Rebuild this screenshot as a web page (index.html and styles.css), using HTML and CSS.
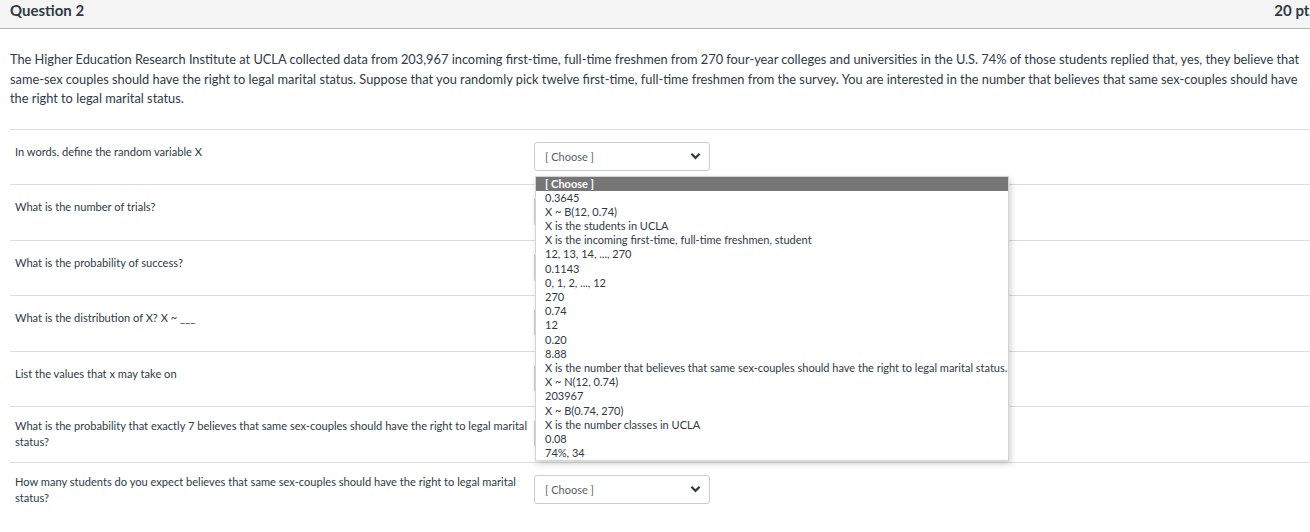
FILE: index.html
```html
<!DOCTYPE html>
<html>
<head>
<meta charset="utf-8">
<link rel="stylesheet" href="styles.css">
</head>
<body>
<div class="question">
  <div class="q-header">
    <span class="q-title">Question 2</span>
    <span class="q-points">20 pts</span>
  </div>
  <div class="q-text">The Higher Education Research Institute at UCLA collected data from 203,967 incoming first-time, full-time freshmen from 270 four-year colleges and universities in the U.S. 74% of those students replied that, yes, they believe that same-sex couples should have the right to legal marital status. Suppose that you randomly pick twelve first-time, full-time freshmen from the survey. You are interested in the number that believes that same sex-couples should have the right to legal marital status.</div>
  <div class="answers">
    <div class="row">
      <div class="label">In words, define the random variable X</div>
      <div class="control">
        <div class="select"><span>[ Choose ]</span><svg class="chev" viewBox="0 0 12 8" width="11" height="8"><path d="M1.5 1.5 L6 6 L10.5 1.5" fill="none" stroke="#2d3b45" stroke-width="2.4"/></svg></div>
        <ul class="dropdown">
          <li class="active">[ Choose ]</li>
          <li>0.3645</li>
          <li>X ~ B(12, 0.74)</li>
          <li>X is the students in UCLA</li>
          <li>X is the incoming first-time, full-time freshmen, student</li>
          <li>12, 13, 14, ..., 270</li>
          <li>0.1143</li>
          <li>0, 1, 2, ..., 12</li>
          <li>270</li>
          <li>0.74</li>
          <li>12</li>
          <li>0.20</li>
          <li>8.88</li>
          <li>X is the number that believes that same sex-couples should have the right to legal marital status.</li>
          <li>X ~ N(12, 0.74)</li>
          <li>203967</li>
          <li>X ~ B(0.74, 270)</li>
          <li>X is the number classes in UCLA</li>
          <li>0.08</li>
          <li>74%, 34</li>
        </ul>
      </div>
    </div>
    <div class="row">
      <div class="label">What is the number of trials?</div>
      <div class="control"><div class="select"><span>[ Choose ]</span><svg class="chev" viewBox="0 0 12 8" width="11" height="8"><path d="M1.5 1.5 L6 6 L10.5 1.5" fill="none" stroke="#2d3b45" stroke-width="2.4"/></svg></div></div>
    </div>
    <div class="row">
      <div class="label">What is the probability of success?</div>
      <div class="control"><div class="select"><span>[ Choose ]</span><svg class="chev" viewBox="0 0 12 8" width="11" height="8"><path d="M1.5 1.5 L6 6 L10.5 1.5" fill="none" stroke="#2d3b45" stroke-width="2.4"/></svg></div></div>
    </div>
    <div class="row">
      <div class="label">What is the distribution of X? X ~ ___</div>
      <div class="control"><div class="select"><span>[ Choose ]</span><svg class="chev" viewBox="0 0 12 8" width="11" height="8"><path d="M1.5 1.5 L6 6 L10.5 1.5" fill="none" stroke="#2d3b45" stroke-width="2.4"/></svg></div></div>
    </div>
    <div class="row">
      <div class="label">List the values that x may take on</div>
      <div class="control"><div class="select"><span>[ Choose ]</span><svg class="chev" viewBox="0 0 12 8" width="11" height="8"><path d="M1.5 1.5 L6 6 L10.5 1.5" fill="none" stroke="#2d3b45" stroke-width="2.4"/></svg></div></div>
    </div>
    <div class="row two">
      <div class="label">What is the probability that exactly 7 believes that same sex-couples should have the right to legal marital status?</div>
      <div class="control"><div class="select"><span>[ Choose ]</span><svg class="chev" viewBox="0 0 12 8" width="11" height="8"><path d="M1.5 1.5 L6 6 L10.5 1.5" fill="none" stroke="#2d3b45" stroke-width="2.4"/></svg></div></div>
    </div>
    <div class="row two">
      <div class="label">How many students do you expect believes that same sex-couples should have the right to legal marital status?</div>
      <div class="control"><div class="select"><span>[ Choose ]</span><svg class="chev" viewBox="0 0 12 8" width="11" height="8"><path d="M1.5 1.5 L6 6 L10.5 1.5" fill="none" stroke="#2d3b45" stroke-width="2.4"/></svg></div></div>
    </div>
  </div>
</div>
</body>
</html>
```

FILE: styles.css
```css
html, body {
  margin: 0;
  padding: 0;
  overflow: hidden;
  background: #ffffff;
}
body {
  font-family: Lato, "Liberation Sans", sans-serif;
  color: #2d3b45;
}
.question {
  width: 1326px;
}
.q-header {
  display: flex;
  justify-content: space-between;
  align-items: flex-start;
  height: 28px;
  background: #f5f5f5;
  border-bottom: 1px solid #b4b4b4;
  padding: 0 10px;
}
.q-title {
  font-size: 15px;
  font-weight: bold;
  line-height: 20px;
}
.q-points {
  font-size: 15px;
  font-weight: bold;
  line-height: 20px;
}
.q-text {
  width: 1292px;
  padding: 21px 10px 0 10px;
  font-size: 12.8px;
  line-height: 19.5px;
}
.answers {
  margin: 20px 0 0 10px;
}
.row {
  display: grid;
  grid-template-columns: 519px 1fr;
  border-top: 1px solid #dcdcdc;
  height: 54.5px;
  padding-left: 5px;
}
.label {
  font-size: 11.1px;
  line-height: 16px;
  padding-top: 14px;
  padding-right: 6px;
}
.row.two .label {
  padding-top: 11px;
}
.control {
  position: relative;
  padding-top: 12px;
}
.select {
  display: flex;
  align-items: center;
  justify-content: space-between;
  box-sizing: border-box;
  width: 176px;
  height: 29px;
  border: 1px solid #c7cdd1;
  border-radius: 3px;
  background: #ffffff;
  padding: 0 8px 0 10px;
  font-size: 11px;
  color: #565f66;
}
.chev {
  display: block;
}
.dropdown {
  position: absolute;
  top: 46px;
  left: 1px;
  width: 474px;
  box-sizing: border-box;
  margin: 0;
  padding: 0;
  list-style: none;
  background: #ffffff;
  border: 1px solid #d4d4d4;
  box-shadow: 2px 3px 6px rgba(0, 0, 0, 0.18);
  z-index: 10;
}
.dropdown li {
  font-size: 11px;
  line-height: 14.2px;
  height: 14.2px;
  padding-left: 9px;
  color: #2d3b45;
  white-space: nowrap;
}
.dropdown li.active {
  background: #767676;
  color: #ffffff;
  font-weight: bold;
}
```
